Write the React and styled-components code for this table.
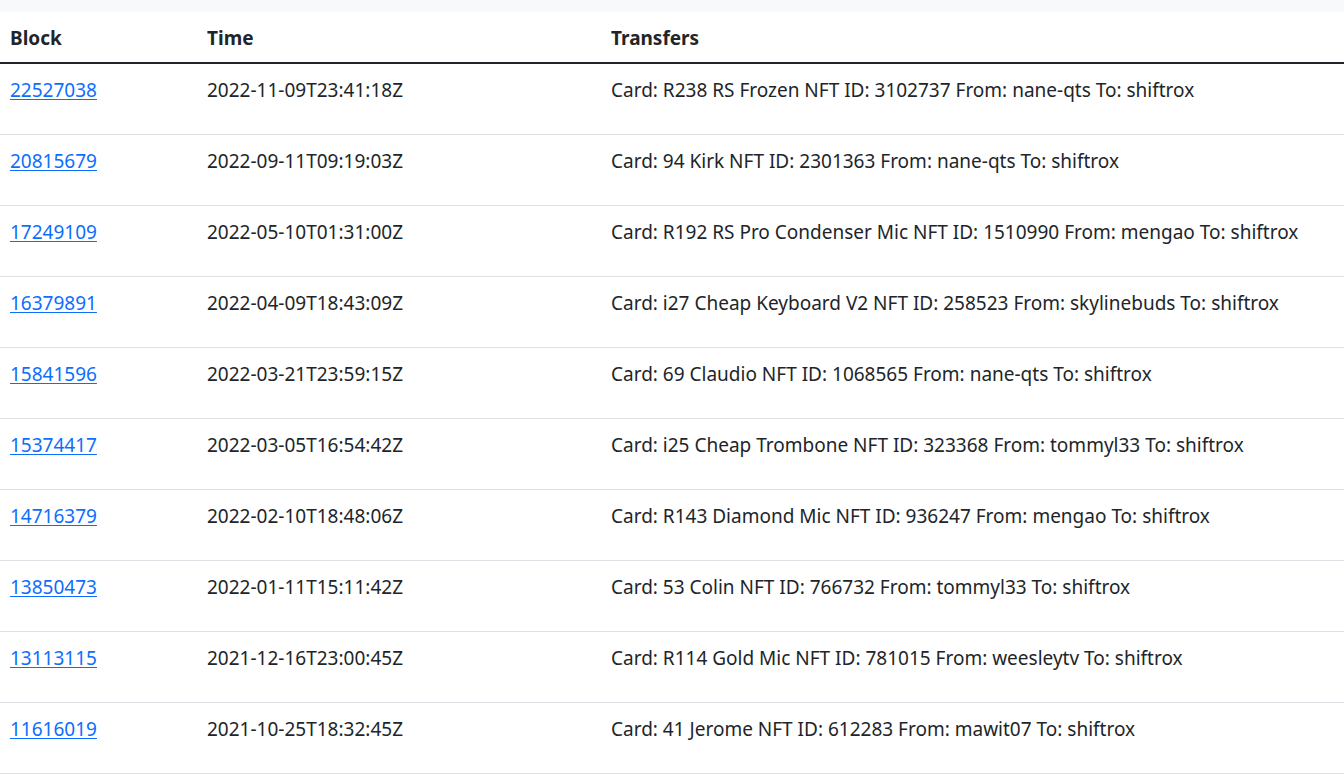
import React from 'react';
import styled, { createGlobalStyle } from 'styled-components';

const GlobalStyle = createGlobalStyle`
  body {
    margin: 0;
    background: #fff;
    font-family: "Noto Sans", "Open Sans", sans-serif;
    color: #212529;
  }
`

const TopStrip = styled.div`
  height: 12px;
  background: #f8f9fa;
`

const Table = styled.table`
  width: 100%;
  table-layout: fixed;
  border-collapse: collapse;
  font-size: 19px;
  line-height: 30px;
`

const HeadCell = styled.th`
  box-sizing: border-box;
  text-align: left;
  font-weight: 700;
  width: ${p => p.$width || 'auto'};
  padding: 11px 10px 9px;
  border-bottom: 2px solid #212529;
`

const Row = styled.tr`
  border-bottom: 1px solid #dee2e6;
`

const Cell = styled.td`
  height: 71px;
  box-sizing: border-box;
  vertical-align: top;
  padding: 11px 10px 0;
  white-space: nowrap;
`

const BlockLink = styled.a`
  color: #0d6efd;
  text-decoration: underline;
  text-underline-offset: 2px;
`

const transfers = [
  ['22527038', '2022-11-09T23:41:18Z', 'Card: R238 RS Frozen NFT ID: 3102737 From: nane-qts To: shiftrox'],
  ['20815679', '2022-09-11T09:19:03Z', 'Card: 94 Kirk NFT ID: 2301363 From: nane-qts To: shiftrox'],
  ['17249109', '2022-05-10T01:31:00Z', 'Card: R192 RS Pro Condenser Mic NFT ID: 1510990 From: mengao To: shiftrox'],
  ['16379891', '2022-04-09T18:43:09Z', 'Card: i27 Cheap Keyboard V2 NFT ID: 258523 From: skylinebuds To: shiftrox'],
  ['15841596', '2022-03-21T23:59:15Z', 'Card: 69 Claudio NFT ID: 1068565 From: nane-qts To: shiftrox'],
  ['15374417', '2022-03-05T16:54:42Z', 'Card: i25 Cheap Trombone NFT ID: 323368 From: tommyl33 To: shiftrox'],
  ['14716379', '2022-02-10T18:48:06Z', 'Card: R143 Diamond Mic NFT ID: 936247 From: mengao To: shiftrox'],
  ['13850473', '2022-01-11T15:11:42Z', 'Card: 53 Colin NFT ID: 766732 From: tommyl33 To: shiftrox'],
  ['13113115', '2021-12-16T23:00:45Z', 'Card: R114 Gold Mic NFT ID: 781015 From: weesleytv To: shiftrox'],
  ['11616019', '2021-10-25T18:32:45Z', 'Card: 41 Jerome NFT ID: 612283 From: mawit07 To: shiftrox'],
]

export default function App() {
  return (
    <>
      <GlobalStyle />
      <TopStrip />
      <Table>
        <thead>
          <tr>
            <HeadCell $width="197px">Block</HeadCell>
            <HeadCell $width="404px">Time</HeadCell>
            <HeadCell>Transfers</HeadCell>
          </tr>
        </thead>
        <tbody>
          {transfers.map(([block, time, text]) => (
            <Row key={block}>
              <Cell><BlockLink href="#">{block}</BlockLink></Cell>
              <Cell>{time}</Cell>
              <Cell>{text}</Cell>
            </Row>
          ))}
        </tbody>
      </Table>
    </>
  )
}
